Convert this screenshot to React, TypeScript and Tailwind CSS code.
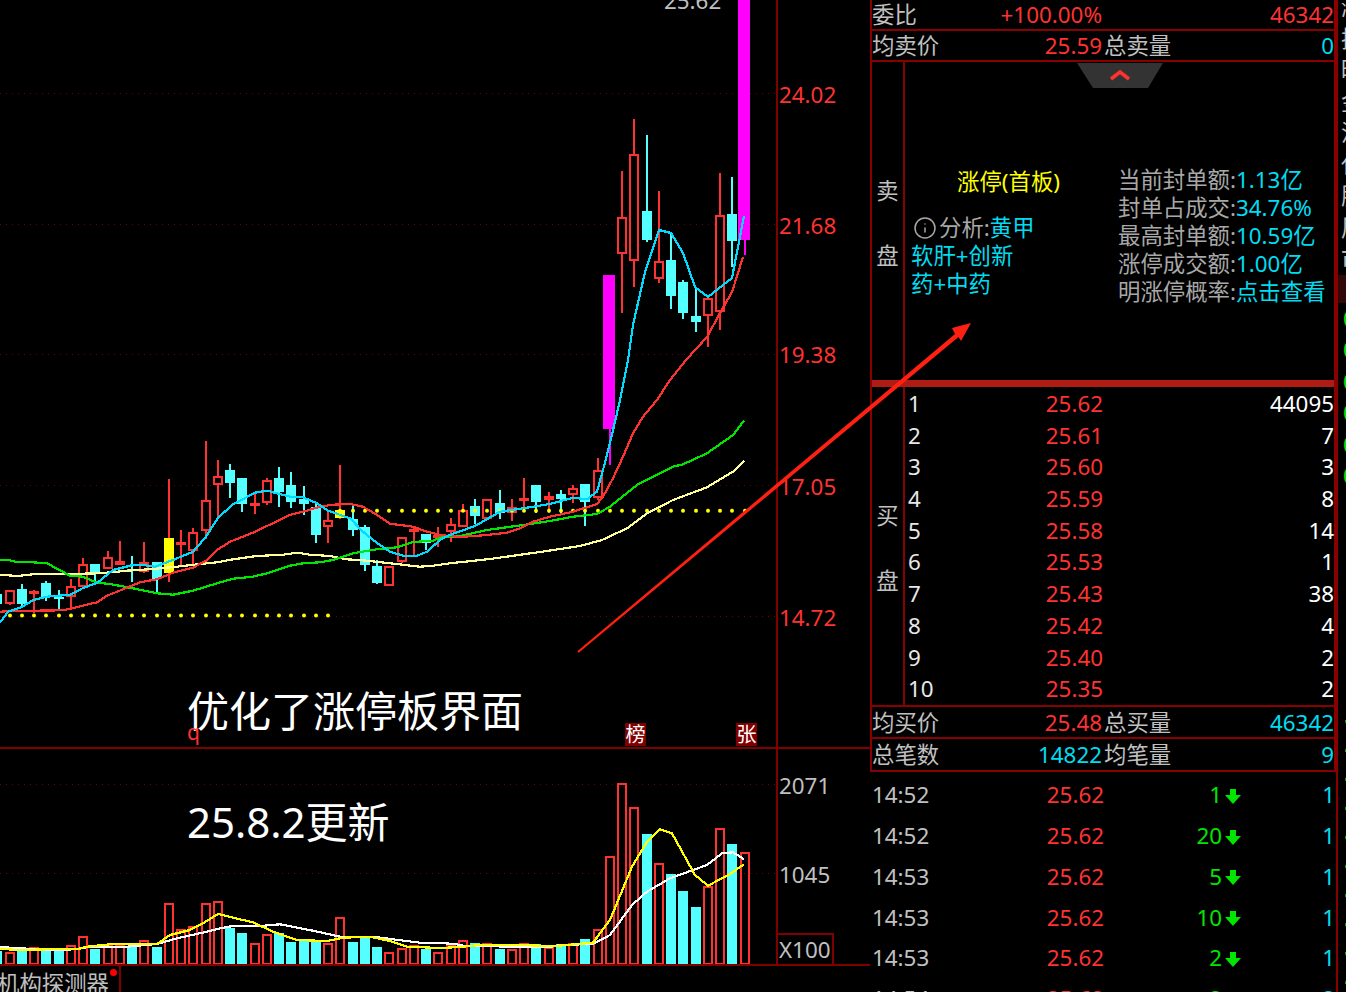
import { Info } from "lucide-react";

const RED = "#ff3232";
const CYAN = "#54ffff";

type Kind = "r" | "c" | "y" | "m";

// index, body top, body bottom, wick high, wick low, kind
const candles: [number, number, number, number, number, Kind][] = [
  [-1, 594, 604, 594, 604, "c"],
  [0, 590, 604, 590, 605, "r"],
  [1, 589, 604, 584, 606, "c"],
  [2, 591, 593, 590, 613, "r"],
  [3, 583, 597, 581, 601, "c"],
  [4, 597, 599, 590, 610, "c"],
  [5, 586, 597, 579, 609, "r"],
  [6, 564, 587, 558, 587, "r"],
  [7, 564, 574, 564, 582, "c"],
  [8, 557, 569, 551, 569, "r"],
  [9, 561, 565, 541, 565, "r"],
  [10, 569, 570, 556, 582, "c"],
  [11, 562, 572, 542, 573, "r"],
  [12, 562, 579, 562, 592, "c"],
  [13, 538, 573, 479, 582, "y"],
  [14, 542, 545, 530, 567, "r"],
  [15, 532, 551, 528, 565, "r"],
  [16, 500, 531, 441, 539, "r"],
  [17, 476, 485, 460, 519, "r"],
  [18, 470, 483, 464, 498, "c"],
  [19, 478, 504, 478, 512, "c"],
  [20, 503, 505, 494, 514, "r"],
  [21, 480, 503, 478, 505, "r"],
  [22, 478, 492, 467, 507, "c"],
  [23, 485, 502, 472, 508, "c"],
  [24, 499, 504, 486, 515, "c"],
  [25, 507, 535, 503, 543, "c"],
  [26, 520, 527, 512, 543, "r"],
  [27, 510, 518, 465, 519, "y"],
  [28, 519, 530, 505, 536, "c"],
  [29, 527, 565, 525, 571, "c"],
  [30, 566, 583, 560, 584, "c"],
  [31, 566, 586, 566, 586, "r"],
  [32, 537, 562, 537, 563, "r"],
  [33, 529, 530, 527, 556, "r"],
  [34, 534, 543, 534, 550, "c"],
  [35, 535, 537, 527, 547, "r"],
  [36, 524, 532, 518, 542, "r"],
  [37, 510, 527, 504, 527, "r"],
  [38, 506, 516, 499, 524, "c"],
  [39, 499, 519, 499, 519, "r"],
  [40, 503, 513, 490, 519, "c"],
  [41, 507, 513, 499, 521, "r"],
  [42, 498, 500, 478, 510, "r"],
  [43, 485, 502, 485, 513, "c"],
  [44, 496, 500, 492, 513, "r"],
  [45, 494, 499, 490, 513, "c"],
  [46, 488, 495, 485, 503, "r"],
  [47, 484, 502, 484, 526, "c"],
  [48, 470, 498, 458, 500, "r"],
  [49, 275, 429, 275, 465, "m"],
  [50, 217, 254, 171, 313, "r"],
  [51, 154, 261, 119, 287, "r"],
  [52, 211, 240, 135, 242, "c"],
  [53, 261, 279, 191, 283, "r"],
  [54, 260, 296, 233, 309, "c"],
  [55, 282, 313, 280, 319, "c"],
  [56, 316, 322, 287, 332, "c"],
  [57, 298, 316, 298, 347, "r"],
  [58, 215, 312, 173, 330, "r"],
  [59, 214, 241, 177, 267, "c"],
  [60, 0, 240, 0, 255, "m"],
];

const ma5 =
  "0,622.7 8,611.7 22,607 33,600 47,596.7 70,594.7 83,588 97,583 113,570 133,565 143,565 155,566.7 173,560 193,551.7 205,538 218,518 232,505 255,492.7 267,490.7 290,496.7 303,497.3 317,503.3 328,510.7 350,518.3 363,531.7 377,543 390,551.7 403,555.7 417,555.7 427,551.7 440,540 447,536 475,526 500,511.7 523,508.3 550,504 573,497.7 587,499.3 597,491.7 603,470 610,443 617,413 620,400 628,360 633,325 645,272 659,230 671,233 683,253 695,287 708,297 723,285 732,278 744,216";
const ma10 =
  "0,611.7 17,610.7 33,610.7 63,610.3 72,608.3 97,602.3 107,595.7 127,587.7 140,582.3 157,579.3 173,572.7 193,567.7 207,560 217,550 230,541.7 253,532.7 267,526 290,515 303,511.7 320,506.7 333,504.7 350,504 363,506.7 377,515 390,523.7 413,526.7 427,531.7 440,535 460,537 487,535 507,532.7 520,528.3 533,521.7 550,516.7 573,511.7 597,504 603,496.7 613,478.3 623,456.7 633,433.3 643,416.7 657,400 670,380 686,360 707,337 720,313 732,292 743,257";
const ma20 =
  "0,560 8,560 17,562 33,562.3 47,563.3 70,575.7 83,576.7 97,582.7 110,584 133,588.3 157,593.3 173,594.7 193,590.7 217,583.3 233,578.7 253,576.7 267,573.3 290,565.7 303,563.3 320,562.3 333,560 353,553.3 377,549.3 397,547.3 413,542 433,540.7 440,537.7 460,536 487,530 523,525 550,521 573,516.7 597,514 610,506.7 637,485 673,466.7 683,464.3 707,453.3 733,435 744,420.7";
const ma30 =
  "0,574.7 17,576 33,574.3 67,574 100,573.3 127,570.7 153,569 177,566.7 200,564 217,562.3 233,559.3 257,556 283,554.7 297,552.7 310,554.7 330,556 347,559.3 367,560.7 390,563.3 420,566.7 433,565.7 450,563.3 490,559 540,552 580,546 602,540 627,528.3 647,513.3 673,500 707,487.3 733,471.7 744,460.7";

const volBars: [number, number, Kind][] = [
  [-1, 951, "c"], [0, 952, "r"], [1, 951, "c"], [2, 947, "r"], [3, 951, "c"], [4, 951, "c"],
  [5, 945, "r"], [6, 936, "r"], [7, 949, "c"], [8, 945, "r"], [9, 944, "r"], [10, 947, "c"],
  [11, 940, "r"], [12, 947, "c"], [13, 903, "r"], [14, 929, "r"], [15, 926, "r"], [16, 903, "r"],
  [17, 901, "r"], [18, 928, "c"], [19, 933, "c"], [20, 943, "r"], [21, 934, "r"], [22, 933, "c"],
  [23, 942, "c"], [24, 941, "c"], [25, 941, "c"], [26, 943, "r"], [27, 917, "r"], [28, 942, "c"],
  [29, 938, "c"], [30, 947, "c"], [31, 952, "r"], [32, 948, "r"], [33, 945, "r"], [34, 949, "c"],
  [35, 952, "r"], [36, 944, "r"], [37, 940, "r"], [38, 943, "c"], [39, 943, "r"], [40, 949, "c"],
  [41, 949, "r"], [42, 943, "r"], [43, 944, "c"], [44, 947, "r"], [45, 944, "c"], [46, 943, "r"],
  [47, 939, "c"], [48, 929, "r"], [49, 856, "r"], [50, 783, "r"], [51, 807, "r"], [52, 834, "c"],
  [53, 863, "r"], [54, 874, "c"], [55, 891, "c"], [56, 907, "c"], [57, 886, "r"], [58, 828, "r"],
  [59, 844, "c"], [60, 852, "r"],
];

const volYellow =
  "0,948.7 17,950 50,949.3 77,949.3 87,946.7 113,944 157,944 170,935 190,930 203,923.3 218,914 233,917.7 253,922.3 273,931.7 297,940 327,941 343,937.7 370,936.7 390,941 407,946.7 440,948 460,947 480,945 515,945 555,946 593,942.7 610,920 632,866.7 647,841.7 660,829.3 672,833.3 695,875 708,885.7 730,874 744,864.3";
const volWhite =
  "0,946.7 10,947.7 50,950 75,949.3 87,947.3 120,947.3 157,944 177,938.3 207,931.7 220,928.3 233,926 260,926 280,924.3 313,930.7 340,936.7 377,937.3 420,942.7 440,943 455,944 465,946 550,947 560,945 593,944 610,935 632,905 647,891.7 670,878.3 707,865 722,853.3 733,852.3 744,859.3";

const cx = (i: number) => Math.round(9.6 + 12.25 * i);
const dots = (from: number, to: number) =>
  Array.from({ length: to - from + 1 }, (_, n) => cx(from + n));

const buyRows = [
  ["1", "25.62", "44095"],
  ["2", "25.61", "7"],
  ["3", "25.60", "3"],
  ["4", "25.59", "8"],
  ["5", "25.58", "14"],
  ["6", "25.53", "1"],
  ["7", "25.43", "38"],
  ["8", "25.42", "4"],
  ["9", "25.40", "2"],
  ["10", "25.35", "2"],
];

const ticks = [
  ["14:52", "1", "1"],
  ["14:52", "20", "1"],
  ["14:53", "5", "1"],
  ["14:53", "10", "1"],
  ["14:53", "2", "1"],
  ["14:54", "2", "2"],
];

const stats = [
  ["当前封单额:", "1.13亿"],
  ["封单占成交:", "34.76%"],
  ["最高封单额:", "10.59亿"],
  ["涨停成交额:", "1.00亿"],
  ["明涨停概率:", "点击查看"],
];

const edgeChars = ["涨", "振", "昨", "金", "流", "代", "股", "周", "市"];

function Candle({ c }: { c: (typeof candles)[number] }) {
  const [i, top, bottom, hi, lo, kind] = c;
  const x = cx(i);
  const wick = kind === "c" ? CYAN : kind === "m" ? "#ff00ff" : RED;
  if (kind === "m") {
    return (
      <g shapeRendering="crispEdges">
        <rect x={x - 1} y={hi} width={2} height={lo - hi} fill={wick} />
        <rect x={x - 7} y={top} width={12} height={bottom - top} fill={wick} />
      </g>
    );
  }
  return (
    <g shapeRendering="crispEdges">
      <rect x={x - 1} y={hi} width={2} height={lo - hi} fill={wick} />
      {kind === "r" ? (
        <rect x={x - 4} y={top + 1} width={8} height={Math.max(bottom - top - 2, 1)} fill="#000" stroke={RED} strokeWidth={2} />
      ) : (
        <rect x={x - 5} y={top} width={10} height={bottom - top} fill={kind === "y" ? "#ffff00" : CYAN} />
      )}
    </g>
  );
}

function MainChart() {
  return (
    <svg width={776} height={747} className="block">
      {[93, 224, 354, 485, 616].map((y) => (
        <line key={y} x1={0} x2={776} y1={y + 0.5} y2={y + 0.5} stroke="#700000" strokeDasharray="1 5" />
      ))}
      {candles.map((c) => (
        <Candle key={c[0]} c={c} />
      ))}
      {dots(0, 26).map((x) => (
        <circle key={x} cx={x} cy={615.5} r={2} fill="#ffff00" />
      ))}
      {dots(27, 60).map((x) => (
        <circle key={x} cx={x} cy={510.7} r={2} fill="#ffff00" />
      ))}
      <g fill="none" strokeWidth={2.2} shapeRendering="crispEdges">
        <polyline points={ma30} stroke="#ffff99" />
        <polyline points={ma20} stroke="#00e600" />
        <polyline points={ma10} stroke={RED} />
        <polyline points={ma5} stroke="#00dcff" />
      </g>
    </svg>
  );
}

function VolumeChart() {
  return (
    <svg width={776} height={215} viewBox="0 749 776 215" className="block">
      {[784, 873].map((y) => (
        <line key={y} x1={0} x2={776} y1={y + 0.5} y2={y + 0.5} stroke="#700000" strokeDasharray="1 5" />
      ))}
      {volBars.map(([i, top, kind]) => {
        const x = cx(i);
        return kind === "r" ? (
          <rect key={i} x={x - 4} y={top + 1} width={8} height={964 - top - 1} fill="none" stroke={RED} strokeWidth={2} shapeRendering="crispEdges" />
        ) : (
          <rect key={i} x={x - 5} y={top} width={10} height={964 - top} fill={CYAN} shapeRendering="crispEdges" />
        );
      })}
      <g fill="none" strokeWidth={2.2} shapeRendering="crispEdges">
        <polyline points={volWhite} stroke="#ffffff" />
        <polyline points={volYellow} stroke="#ffff00" />
      </g>
    </svg>
  );
}

function DownArrow() {
  return (
    <svg width={16} height={15} viewBox="0 0 16 15" className="mt-[2px] ml-[3px]">
      <polygon points="5,0 11,0 11,6 16,6 8,15 0,6 5,6" fill="#00e600" />
    </svg>
  );
}

function Badge({ text }: { text: string }) {
  return (
    <div className="flex h-[23px] w-[21px] items-center justify-center bg-[#800000] text-[20px] leading-none text-white">
      {text}
    </div>
  );
}

export default function App() {
  return (
    <div className="relative flex h-[992px] w-[1346px] overflow-hidden bg-black text-[22.4px] leading-[30px] text-[#c0c0c0] font-['Noto_Sans','Noto_Sans_CJK_SC',sans-serif]">
      {/* left: charts */}
      <div className="flex w-[870px] shrink-0 flex-col">
        <div className="flex h-[749px] border-b-2 border-[#800000]">
          <div className="relative w-[776px]">
            <MainChart />
            <div className="absolute top-[-14px] left-[664px] flex items-start gap-[4px]">
              <span>25.62</span>
              <span className="mt-[13px] h-[1px] w-[13px] bg-[#c0c0c0]" />
            </div>
            <div className="absolute top-[681px] left-[187px] text-[42px] leading-[60px] whitespace-nowrap text-white">
              优化了涨停板界面
            </div>
            <div className="absolute top-[722px] left-[187px] text-[21px] leading-[20px] text-[#ff3232]">q</div>
            <div className="absolute top-[723px] left-[625px]">
              <Badge text="榜" />
            </div>
            <div className="absolute top-[723px] left-[736px]">
              <Badge text="张" />
            </div>
          </div>
          <div className="flex-1 border-l-2 border-[#800000] pt-[80px] pl-[1px] text-[#ff3232]">
            <div className="h-[131px]">24.02</div>
            <div className="h-[129px]">21.68</div>
            <div className="h-[132px]">19.38</div>
            <div className="h-[131px]">17.05</div>
            <div className="h-[30px]">14.72</div>
          </div>
        </div>
        <div className="flex h-[217px] border-b-2 border-[#800000]">
          <div className="relative w-[776px]">
            <VolumeChart />
            <div className="absolute top-[43px] left-[187px] text-[42px] leading-[60px] whitespace-nowrap text-white">
              25.8.2更新
            </div>
          </div>
          <div className="flex flex-1 flex-col border-l-2 border-[#800000] pt-[22px]">
            <div className="pl-[1px]">2071</div>
            <div className="mt-[59px] pl-[1px]">1045</div>
            <div className="mt-[43px] h-[31px] w-[56px] border-t-2 border-r-2 border-[#800000] pl-[1px] leading-[29px]">
              X100
            </div>
          </div>
        </div>
        <div className="relative h-[26px] w-[121px] overflow-hidden border-r-2 border-[#800000] pt-[3px]">
          <div className="-ml-[3px] whitespace-nowrap">机构探测器</div>
          <span className="absolute top-[3px] left-[110px] h-[7px] w-[7px] rounded-full bg-[#ff0000]" />
        </div>
      </div>

      {/* right: order book */}
      <div className="flex w-[468px] shrink-0 flex-col">
        <div className="border-r-4 border-l-2 border-[#880000]">
          <div className="flex h-[31px] border-b-2 border-[#880000] leading-[29px]">
            <div className="flex w-[230px] justify-between">
              <span>委比</span>
              <span className="text-[#ff3232]">+100.00%</span>
            </div>
            <div className="flex-1 text-right text-[#ff3232]">46342</div>
          </div>
          <div className="flex h-[31px] border-b-2 border-[#880000] leading-[30px]">
            <div className="flex w-[230px] justify-between">
              <span>均卖价</span>
              <span className="text-[#ff3232]">25.59</span>
            </div>
            <span className="pl-[2px]">总卖量</span>
            <div className="flex-1 text-right text-[#00dcf0]">0</div>
          </div>

          <div className="relative flex h-[318px]">
            <div className="absolute top-[1px] left-[205px]">
              <svg width={86} height={25} viewBox="0 0 86 25" className="block">
                <polygon points="0,0 86,0 71,25 16,25" fill="#333333" />
                <polyline points="34,16 43,9 52,16" fill="none" stroke="#ff3232" strokeWidth={3.5} />
              </svg>
            </div>
            <div className="flex w-[31px] flex-col items-center gap-[35px] pt-[114px]">
              <span>卖</span>
              <span>盘</span>
            </div>
            <div className="flex flex-1 border-l-2 border-[#880000] pt-[104px]">
              <div className="w-[213px] pl-[6px]">
                <div className="mt-[1px] pl-[46px] text-[#ffff00]">涨停(首板)</div>
                <div className="mt-[17px] flex h-[28px] items-center pl-[2px] leading-[28px]">
                  <Info size={24} strokeWidth={1.5} className="mr-[2px] text-[#a8a8a8]" />
                  <span className="text-[#a8a8a8]">分析:</span>
                  <span className="text-[#00dcf0]">黄甲</span>
                </div>
                <div className="leading-[28px] text-[#00dcf0]">软肝+创新</div>
                <div className="leading-[28px] text-[#00dcf0]">药+中药</div>
              </div>
              <div className="flex-1">
                {stats.map(([k, v]) => (
                  <div key={k} className="h-[28px] leading-[28px] whitespace-nowrap">
                    <span className="text-[#a8a8a8]">{k}</span>
                    <span className="text-[#00dcf0]">{v}</span>
                  </div>
                ))}
              </div>
            </div>
          </div>

          <div className="h-[7px] bg-[#b01c14]" />

          <div className="flex h-[320px] border-b-2 border-[#880000]">
            <div className="flex w-[31px] flex-col items-center gap-[35px] pt-[114px]">
              <span>买</span>
              <span>盘</span>
            </div>
            <div className="flex-1 border-l-2 border-[#880000] pt-[1px]">
              {buyRows.map(([n, p, q]) => (
                <div key={n} className="flex h-[31.7px] leading-[32px]">
                  <span className="w-[198px] flex-none pl-[3px] text-[#e8e8e8]">
                    <span className="flex justify-between">
                      <span>{n}</span>
                      <span className="text-[#ff3232]">{p}</span>
                    </span>
                  </span>
                  <span className="flex-1 text-right text-white">{q}</span>
                </div>
              ))}
            </div>
          </div>

          <div className="flex h-[32px] border-b-2 border-[#880000] leading-[32px]">
            <div className="flex w-[230px] justify-between">
              <span>均买价</span>
              <span className="text-[#ff3232]">25.48</span>
            </div>
            <span className="pl-[2px]">总买量</span>
            <div className="flex-1 text-right text-[#00dcf0]">46342</div>
          </div>
          <div className="flex h-[33px] border-b-2 border-[#880000] leading-[31px]">
            <div className="flex w-[230px] justify-between">
              <span>总笔数</span>
              <span className="text-[#00dcf0]">14822</span>
            </div>
            <span className="pl-[2px]">均笔量</span>
            <div className="flex-1 text-right text-[#00dcf0]">9</div>
          </div>
        </div>

        <div className="flex-1 border-r-2 border-[#880000] pt-[3px] pr-[1px] pl-[2px]">
          {ticks.map(([t, v, n], idx) => (
            <div key={idx} className="flex h-[40.75px] items-center">
              <span className="w-[232px] flex-none">
                <span className="flex justify-between">
                  <span>{t}</span>
                  <span className="text-[#ff3232]">25.62</span>
                </span>
              </span>
              <span className="flex w-[137px] flex-none items-center justify-end text-[#00e600]">
                <span>{v}</span>
                <DownArrow />
              </span>
              <span className="flex-1 text-right text-[#00dcf0]">{n}</span>
            </div>
          ))}
        </div>
      </div>

      {/* clipped neighbour panel on the right edge */}
      <div className="flex w-[8px] shrink-0 flex-col overflow-hidden whitespace-nowrap">
        <div className="-mt-[9px]">
          {edgeChars.map((c) => (
            <div key={c} className="h-[31.5px] pl-[3px] leading-[31.5px]">
              {c}
            </div>
          ))}
        </div>
        <div className="h-[28px] bg-[#300808]" />
        {[0, 1, 2, 3, 4, 5].map((n) => (
          <div key={n} className="h-[31.5px] pl-[5px] leading-[31.5px] text-[#00e600]">
            0
          </div>
        ))}
        <div className="mt-[228px] flex flex-col gap-[26px] pl-[7px]">
          {[0, 1, 2, 3, 4, 5, 6, 7, 8, 9].map((n) => (
            <div key={n} className="h-[3px] w-[1px] bg-[#00a000]" />
          ))}
        </div>
      </div>

      {/* arrow drawn on top of everything */}
      <svg width={1346} height={992} className="pointer-events-none absolute inset-0">
        <polygon points="577.3,651.2 955,334 952,328 971,323 961,341 958.5,337 578.7,652.8" fill="#ff2014" />
      </svg>
    </div>
  );
}
